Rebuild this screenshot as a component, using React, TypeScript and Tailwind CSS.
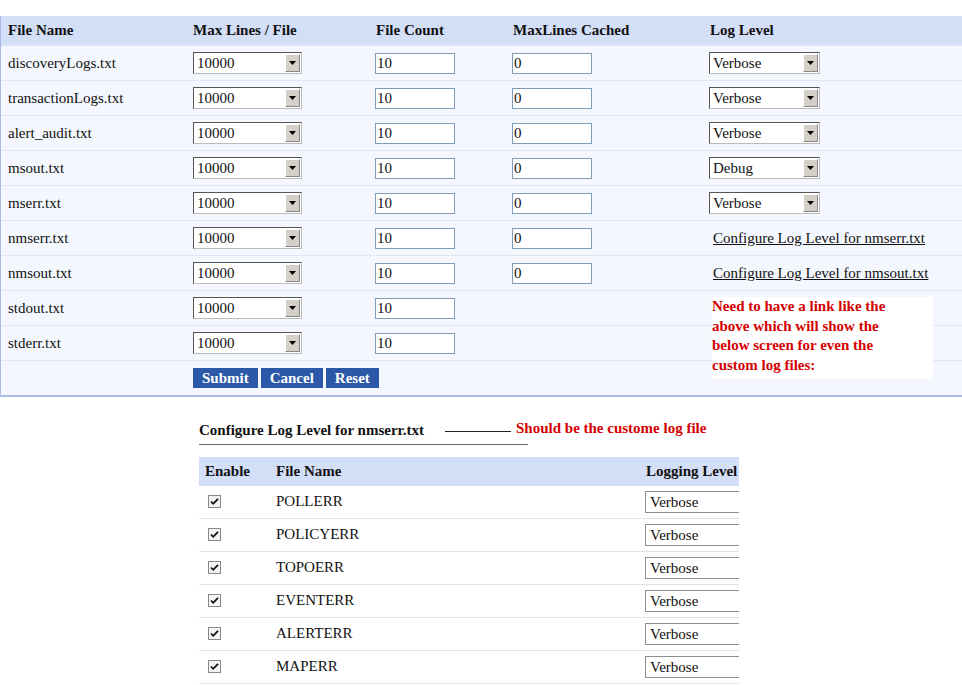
import React from "react";

const files = [
  { name: "discoveryLogs.txt", cached: true, level: "Verbose" },
  { name: "transactionLogs.txt", cached: true, level: "Verbose" },
  { name: "alert_audit.txt", cached: true, level: "Verbose" },
  { name: "msout.txt", cached: true, level: "Debug" },
  { name: "mserr.txt", cached: true, level: "Verbose" },
  { name: "nmserr.txt", cached: true, link: "Configure Log Level for nmserr.txt" },
  { name: "nmsout.txt", cached: true, link: "Configure Log Level for nmsout.txt" },
  { name: "stdout.txt", cached: false },
  { name: "stderr.txt", cached: false },
];

const subFiles = ["POLLERR", "POLICYERR", "TOPOERR", "EVENTERR", "ALERTERR", "MAPERR"];

function FakeSelect({ value, width }: { value: string; width: string }) {
  return (
    <div
      className={`flex h-[22px] ${width} items-stretch border border-t-[#555] border-l-[#555] border-r-[#bbb] border-b-[#bbb] bg-white`}
    >
      <span className="flex-1 pl-[3px] leading-[20px]">{value}</span>
      <span className="m-[1px] flex w-[15px] items-center justify-center border border-t-white border-l-white border-r-[#888] border-b-[#888] bg-[#d4d0c8]">
        <svg width="7" height="4" viewBox="0 0 7 4">
          <path d="M0 0h7L3.5 4z" fill="#000" />
        </svg>
      </span>
    </div>
  );
}

function TextBox({ value }: { value: string }) {
  return (
    <div className="h-[21px] w-[80px] border border-[#7f9db9] bg-white pl-[1px] leading-[19px]">
      {value}
    </div>
  );
}

function Check() {
  return (
    <svg width="13" height="13" viewBox="0 0 13 13">
      <rect x="0.5" y="0.5" width="12" height="12" fill="#f4f4f4" stroke="#888" />
      <path d="M3 6.5l2.2 2.3L10 3.8" fill="none" stroke="#111" strokeWidth="1.8" />
    </svg>
  );
}

export default function App() {
  return (
    <div className="min-h-screen bg-white text-[15px] text-[#111]" style={{ fontFamily: '"Liberation Serif", "Times New Roman", serif' }}>
      {/* --- Top panel --- */}
      <div className="pt-[16px]">
        <div className="border-l-[1px] border-b-2 border-[#a9bbe6]">
          <div className="flex h-[29px] items-center bg-[#d3def7] pl-[7px] font-bold">
            <div className="w-[185px]">File Name</div>
            <div className="w-[183px]">Max Lines / File</div>
            <div className="w-[137px]">File Count</div>
            <div className="w-[197px]">MaxLines Cached</div>
            <div>Log Level</div>
          </div>
          <div className="relative bg-[#f4f7fd]">
            {files.map((f) => (
              <div key={f.name} className="flex h-[35px] items-center border-t border-[#dfe6f5] pl-[7px]">
                <div className="w-[185px]">{f.name}</div>
                <div className="w-[182px]">
                  <FakeSelect value="10000" width="w-[109px]" />
                </div>
                <div className="w-[137px]">
                  <TextBox value="10" />
                </div>
                <div className="w-[197px]">{f.cached && <TextBox value="0" />}</div>
                <div>
                  {f.level && <FakeSelect value={f.level} width="w-[111px]" />}
                  {f.link && <span className="ml-[4px] underline">{f.link}</span>}
                </div>
              </div>
            ))}
            <div className="flex h-[35px] items-center gap-[3px] border-t border-[#dfe6f5] pl-[192px]">
              {["Submit", "Cancel", "Reset"].map((b) => (
                <button
                  key={b}
                  className="h-[20px] bg-[#2c58a8] px-[9px] text-[15px] font-bold leading-[20px] text-white"
                >
                  {b}
                </button>
              ))}
            </div>
            <div className="absolute left-[711px] top-[252px] w-[221px] bg-white pb-[4px] pr-[26px] text-[15px] font-bold leading-[19.5px] text-[#d40000]">
              Need to have a link like the above which will show the below screen for even the custom log files:
            </div>
          </div>
        </div>
      </div>

      {/* --- Sub screen --- */}
      <div className="ml-[199px] mt-[22px] w-[540px]">
        <div className="w-[329px] border-b border-[#667] pb-[2px] font-bold">
          Configure Log Level for nmserr.txt
        </div>
        <div className="relative">
          <div className="absolute left-[246px] top-[-14px] h-px w-[66px] bg-[#222]" />
          <div className="absolute left-[317px] top-[-28px] whitespace-nowrap font-bold text-[#d40000]">
            Should be the custome log file
          </div>
        </div>

        <div className="mt-[12px] overflow-hidden">
          <div className="flex h-[29px] items-center bg-[#d3def7] font-bold">
            <div className="w-[77px] shrink-0 pl-[6px]">Enable</div>
            <div className="w-[370px] shrink-0">File Name</div>
            <div className="shrink-0 whitespace-nowrap">Logging Level</div>
          </div>
          {subFiles.map((s) => (
            <div key={s} className="flex h-[33px] items-center border-b border-[#e2e2e2]">
              <div className="w-[77px] shrink-0 pl-[9px]">
                <Check />
              </div>
              <div className="w-[369px] shrink-0">{s}</div>
              <div className="h-[22px] w-[96px] shrink-0 border border-[#8e8e8e] bg-white pl-[4px] leading-[20px]">
                Verbose
              </div>
            </div>
          ))}
        </div>
      </div>
    </div>
  );
}
